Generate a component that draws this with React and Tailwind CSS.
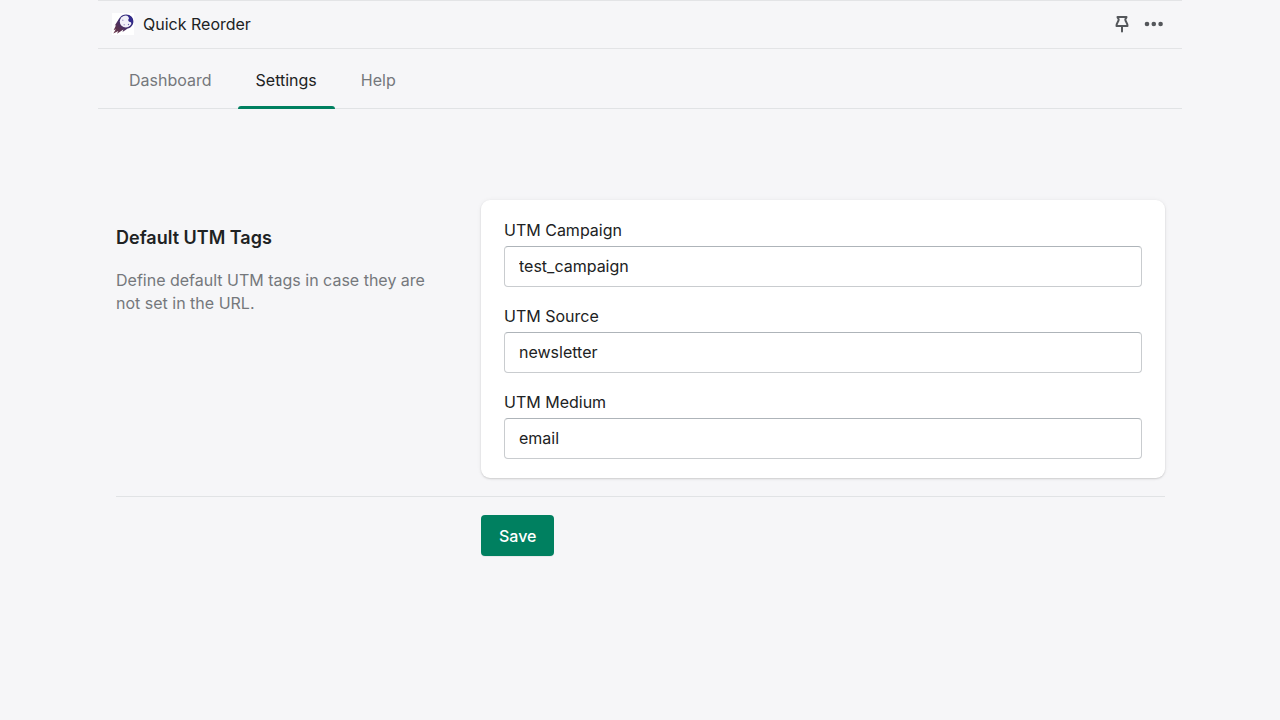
import { useState } from "react";
import { clsx } from "clsx";

const tabs = ["Dashboard", "Settings", "Help"];

const fields = [
  { id: "utm-campaign", label: "UTM Campaign", value: "test_campaign" },
  { id: "utm-source", label: "UTM Source", value: "newsletter" },
  { id: "utm-medium", label: "UTM Medium", value: "email" },
];

function CometLogo() {
  return (
    <svg viewBox="0 0 22 22" className="size-[22px]" aria-hidden="true">
      <defs>
        <linearGradient id="tail" x1="1" y1="0" x2="0" y2="1">
          <stop offset="0.35" stopColor="#332b7c" />
          <stop offset="0.75" stopColor="#5b3350" />
          <stop offset="1" stopColor="#6f3a4c" />
        </linearGradient>
      </defs>
      <rect width="22" height="22" fill="#fff" />
      <path
        d="M7 5.8C8.5 2.8 11.2 1.4 14.2 1.4c4.1 0 7.2 3 7.2 7 0 3.600-2.500 6.300-5.700 7.200L10.500 19l.9-2.400L5 20.800l1.300-2.800-5 2.600 2.500-4.400-2.200 1L4 12.200l-1.200.4z"
        fill="url(#tail)"
      />
      <circle cx="13.800" cy="8.500" r="6" fill="#f1f0f8" />
      <path d="M14.500 2c3.800 0 6.500 2.800 6.300 6.300 0 1.100-.4 2.200-1 3-.2-1.200-.8-1.900-1.600-2.200-1.300-.2-2-.9-1.900-2 0-.9.300-1.300.7-1.700-.4-1.500-1.300-2.500-2.500-3.400z" fill="#332b8c" />
      <circle cx="10.800" cy="7.200" r="0.800" fill="#aaa5cc" />
      <circle cx="12.200" cy="11.800" r="0.800" fill="#aaa5cc" />
      <circle cx="16.500" cy="11.500" r="0.700" fill="#6b64a8" />
    </svg>
  );
}

function PinIcon() {
  return (
    <svg viewBox="0 0 14 18" className="h-[18px] w-[14px]" fill="none" stroke="currentColor" strokeWidth="2" strokeLinejoin="round" strokeLinecap="round" aria-hidden="true">
      <path d="M2.500 2h9c0 1.200-1.200 1.600-1.200 2.600 0 2.200 2.200 3 2.200 6.400h-11c0-3.400 2.200-4.200 2.200-6.400 0-1-1.200-1.400-1.200-2.600zM7 11.500v5" />
    </svg>
  );
}

function DotsIcon() {
  return (
    <svg viewBox="0 0 20 6" className="h-[6px] w-[20px]" fill="currentColor" aria-hidden="true">
      <circle cx="3" cy="3" r="2.300" />
      <circle cx="9.800" cy="3" r="2.300" />
      <circle cx="16.600" cy="3" r="2.300" />
    </svg>
  );
}

function TextField({ id, label, value }) {
  const [text, setText] = useState(value);

  return (
    <div>
      <label htmlFor={id} className="mb-1 block leading-6">
        {label}
      </label>
      <input
        id={id}
        type="text"
        value={text}
        onChange={(e) => setText(e.target.value)}
        className="block h-[41px] w-full rounded border border-[#c9cccf] border-t-[#aeb4b9] bg-white px-[14px] pb-px"
      />
    </div>
  );
}

export default function App() {
  const [active, setActive] = useState("Settings");

  return (
    <div className="min-h-screen bg-[#f6f6f8] font-['Inter',sans-serif] text-base text-[#202223]">
      <div className="mx-auto w-full max-w-[1084px]">
        <header className="flex h-[49px] items-center justify-between border-y border-[#e3e4e6] pr-[18px] pb-[2px] pl-[14px]">
          <div className="flex items-center gap-[9px]">
            <CometLogo />
            <h1>Quick Reorder</h1>
          </div>
          <div className="flex items-center gap-[15px] text-[#54575b]">
            <button type="button" aria-label="Pin app">
              <PinIcon />
            </button>
            <button type="button" aria-label="More actions">
              <DotsIcon />
            </button>
          </div>
        </header>

        <nav className="flex h-[60px] gap-2 border-b border-[#e1e3e5] px-[13px]">
          {tabs.map((tab) => (
            <button
              key={tab}
              type="button"
              onClick={() => setActive(tab)}
              className={clsx(
                "relative px-[18px] pt-[2px]",
                active === tab ? "text-[#202223]" : "text-[#75787c]",
              )}
            >
              {tab}
              {active === tab && (
                <span className="absolute inset-x-0 -bottom-px h-[3px] rounded-t bg-[#008060]" />
              )}
            </button>
          ))}
        </nav>

        <main className="pt-[91px] pr-[17px] pl-[18px]">
          <form onSubmit={(e) => e.preventDefault()}>
            <section className="grid grid-cols-[347fr_684fr] gap-[18px] border-b border-[#e1e3e5] pb-[18px]">
              <div className="pt-[25px]">
                <h2 className="text-lg leading-[26px] font-semibold">Default UTM Tags</h2>
                <p className="mt-[18px] pr-6 leading-[23px] text-[#75787c]">
                  Define default UTM tags in case they are not set in the URL.
                </p>
              </div>
              <div className="flex flex-col gap-[17px] rounded-[9px] bg-white px-[23px] pt-[18px] pb-[19px] shadow-[0_0_5px_rgba(23,24,24,0.05),0_1px_2px_rgba(0,0,0,0.15)]">
                {fields.map((field) => (
                  <TextField key={field.id} {...field} />
                ))}
              </div>
            </section>

            <div className="grid grid-cols-[347fr_684fr] gap-[18px] pt-[18px]">
              <button
                type="submit"
                className="col-start-2 h-[41px] justify-self-start rounded bg-[#008060] px-[18px] font-medium text-white shadow-[0_1px_0_rgba(0,0,0,0.05)]"
              >
                Save
              </button>
            </div>
          </form>
        </main>
      </div>
    </div>
  );
}
